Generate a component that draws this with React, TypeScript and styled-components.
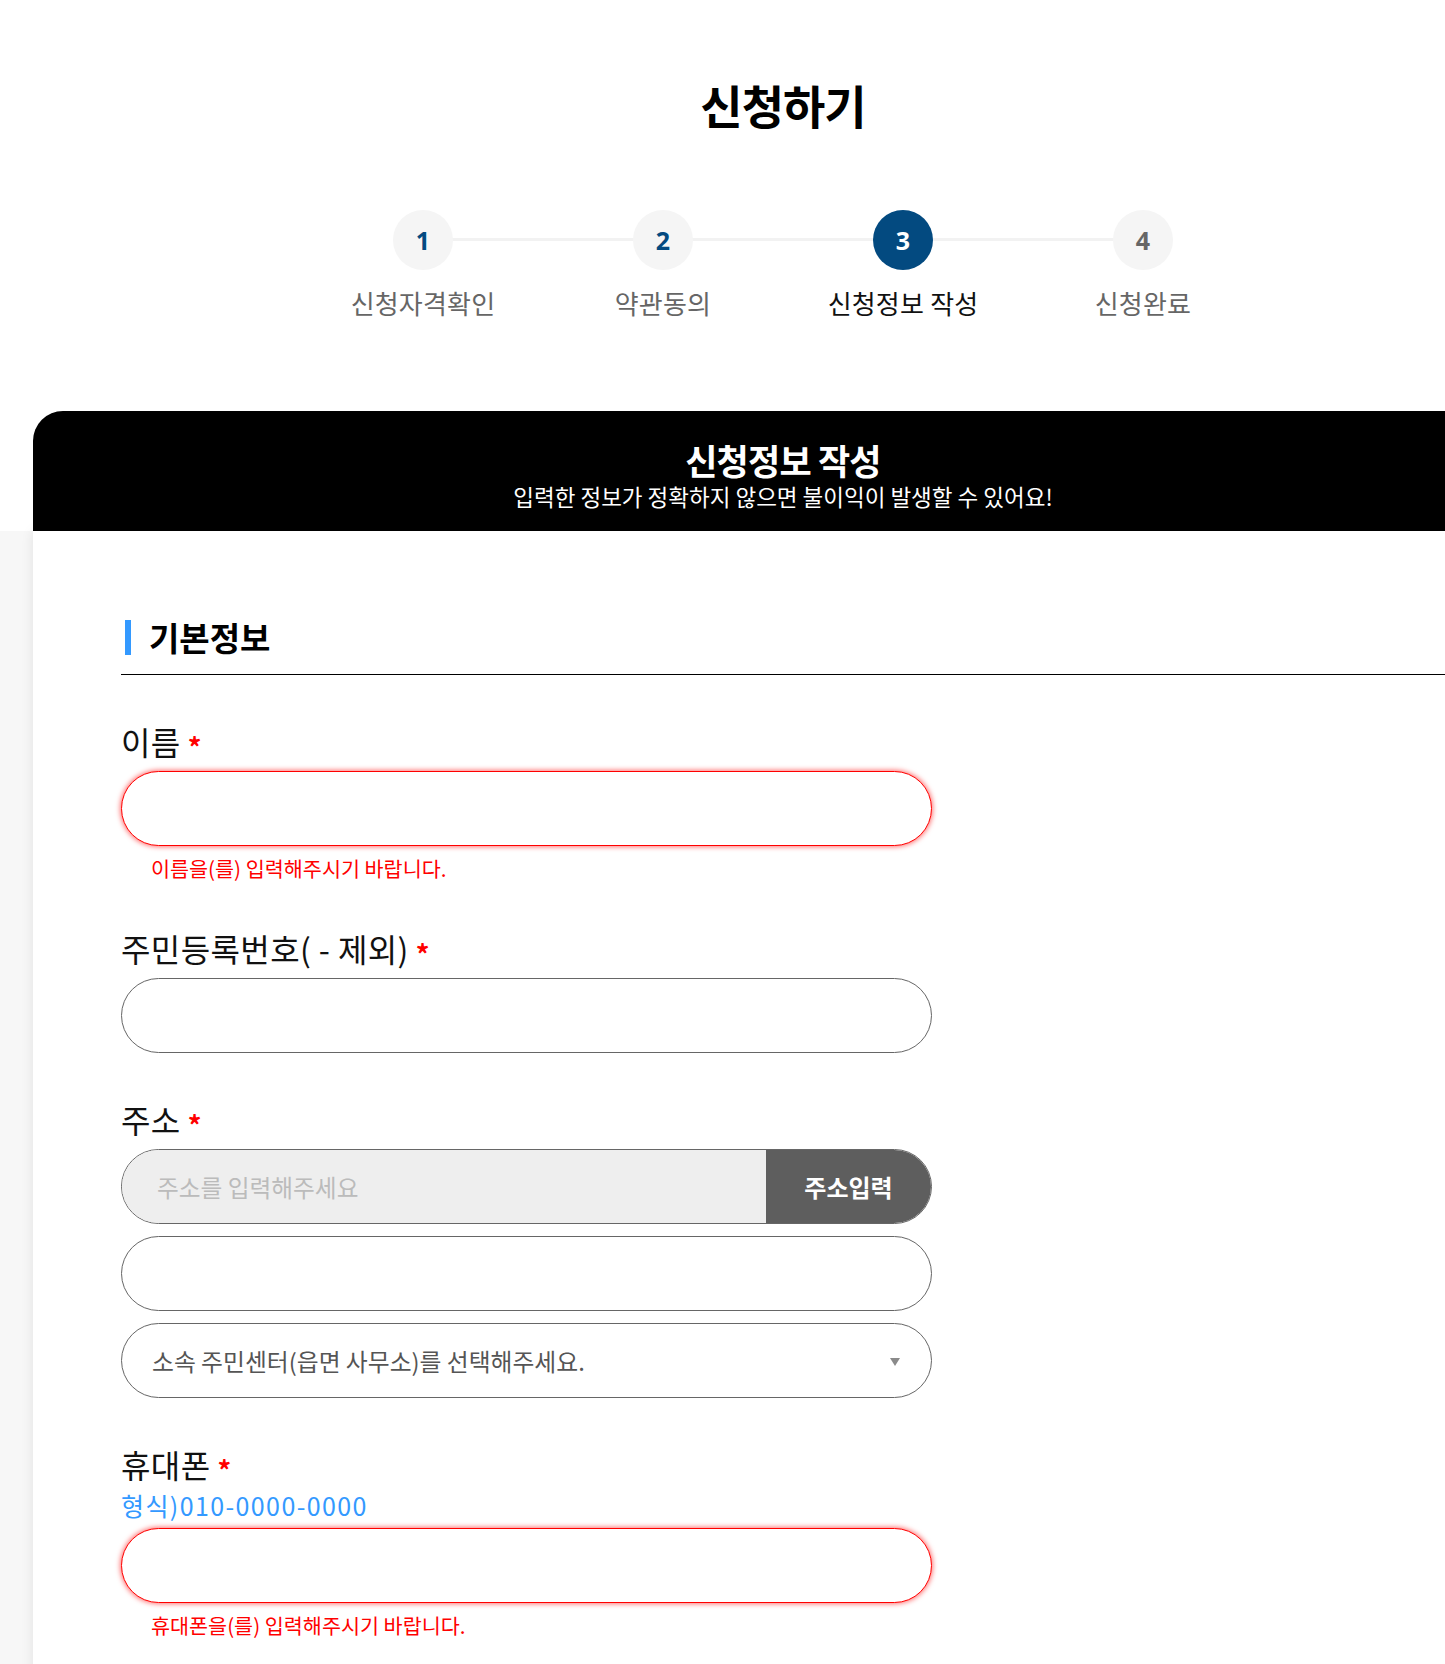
import React from "react";
import styled, { createGlobalStyle, css } from "styled-components";

const GlobalStyle = createGlobalStyle`
  html, body {
    margin: 0;
    padding: 0;
    background: #ffffff;
  }
  body {
    overflow-x: hidden;
    font-family: "Noto Sans CJK KR", "Noto Sans", sans-serif;
    color: #111;
  }
  * { box-sizing: border-box; }
`;

const Page = styled.div`
  width: 1566px;
  padding-bottom: 80px;
`;

const Title = styled.h1`
  margin: 0;
  padding-top: 74px;
  text-align: center;
  font-size: 46px;
  line-height: 60px;
  font-weight: 700;
  color: #000;
  letter-spacing: -1px;
`;

const Steps = styled.ol`
  list-style: none;
  margin: 76px auto 0;
  padding: 0;
  width: 960px;
  display: flex;
  position: relative;
  &::before {
    content: "";
    position: absolute;
    left: 120px;
    right: 120px;
    top: 28px;
    height: 3px;
    background: #f2f2f2;
  }
`;

const Step = styled.li`
  flex: 1;
  display: flex;
  flex-direction: column;
  align-items: center;
`;

const StepCircle = styled.span<{ $active?: boolean; $muted?: boolean }>`
  position: relative;
  z-index: 1;
  width: 60px;
  height: 60px;
  border-radius: 50%;
  display: flex;
  align-items: center;
  justify-content: center;
  font-family: "Open Sans", "Noto Sans", sans-serif;
  font-weight: 700;
  font-size: 25px;
  background: ${(p) => (p.$active ? "#034a80" : "#f5f5f5")};
  color: ${(p) => (p.$active ? "#ffffff" : p.$muted ? "#666666" : "#034a80")};
`;

const StepLabel = styled.span<{ $active?: boolean }>`
  margin-top: 17px;
  font-size: 26px;
  line-height: 32px;
  letter-spacing: 0.2px;
  color: ${(p) => (p.$active ? "#111111" : "#666666")};
`;

const HeaderBar = styled.div`
  margin: 92px 33px 0;
  height: 120px;
  padding-top: 26px;
  background: #000;
  border-radius: 30px 30px 0 0;
  color: #fff;
  text-align: center;
`;

const HeaderTitle = styled.h2`
  margin: 0;
  font-size: 35px;
  line-height: 46px;
  font-weight: 700;
  letter-spacing: -0.8px;
`;

const HeaderSub = styled.p`
  margin: 0;
  font-size: 22.5px;
  line-height: 26px;
`;

const GraySection = styled.section`
  background: #f7f7f7;
  padding: 0 33px;
`;

const FormCard = styled.div`
  background: #fff;
  box-shadow: 0 0 12px rgba(0, 0, 0, 0.09);
  padding: 86px 88px 60px 88px;
`;

const SectionTitle = styled.h3`
  margin: 0;
  padding: 0 0 17px 4px;
  display: flex;
  align-items: center;
  gap: 18px;
  border-bottom: 1px solid #000;
  font-size: 33px;
  line-height: 40px;
  font-weight: 700;
  color: #000;
  &::before {
    content: "";
    width: 6px;
    height: 35px;
    background: #3399ff;
  }
`;

const Fields = styled.div`
  width: 811px;
  padding-top: 46px;
  display: flex;
  flex-direction: column;
  gap: 46px;
`;

const Field = styled.div`
  display: flex;
  flex-direction: column;
`;

const Label = styled.label`
  display: flex;
  align-items: center;
  font-size: 32px;
  line-height: 40px;
  letter-spacing: 0.4px;
  color: #111;
`;

const Required = styled.span`
  margin-left: 7px;
  margin-top: 12px;
  color: #ff0000;
  font-size: 27px;
  line-height: 28px;
  font-weight: 700;
`;

const Hint = styled.p`
  margin: 6px 0 0;
  font-size: 25px;
  line-height: 30px;
  color: #3399ff;
  letter-spacing: 1.4px;
`;

const Stack = styled.div<{ $top?: number }>`
  margin-top: ${(p) => p.$top ?? 10}px;
  display: flex;
  flex-direction: column;
  gap: 12px;
`;

const pill = css`
  height: 75px;
  border-radius: 38px;
  border: 1px solid #666;
  background: #fff;
`;

const TextInput = styled.input<{ $error?: boolean }>`
  ${pill}
  width: 100%;
  padding: 0 34px;
  font-family: inherit;
  font-size: 23px;
  color: #333;
  outline: none;
  ${(p) =>
    p.$error &&
    css`
      border-color: #ff0000;
      box-shadow: 0 0 5px 1px rgba(255, 0, 0, 0.55);
    `}
`;

const ErrorText = styled.p`
  margin: 8px 0 0;
  padding-left: 30px;
  font-size: 20.7px;
  line-height: 28px;
  color: #ff0000;
`;

const AddressRow = styled.div`
  ${pill}
  display: flex;
  overflow: hidden;
`;

const AddressInput = styled.input`
  flex: 1;
  min-width: 0;
  border: none;
  background: #eeeeee;
  padding: 0 35px;
  font-family: inherit;
  font-size: 23.7px;
  color: #333;
  outline: none;
  &::placeholder {
    color: #bbbbbb;
  }
`;

const AddressButton = styled.button`
  width: 165px;
  border: none;
  background: #5e5e5e;
  color: #fff;
  font-family: inherit;
  font-size: 24px;
  font-weight: 700;
  cursor: pointer;
  padding-right: 6px;
`;

const SelectWrap = styled.div`
  position: relative;
  &::after {
    content: "";
    position: absolute;
    right: 32px;
    top: 50%;
    margin-top: -3px;
    border-left: 5px solid transparent;
    border-right: 5px solid transparent;
    border-top: 8px solid #8a8a8a;
    pointer-events: none;
  }
`;

const Select = styled.select`
  ${pill}
  width: 100%;
  appearance: none;
  -webkit-appearance: none;
  padding: 0 60px 0 30px;
  font-family: inherit;
  font-size: 23.8px;
  color: #555;
  outline: none;
`;

export default function App() {
  const steps = [
    { n: 1, label: "신청자격확인" },
    { n: 2, label: "약관동의" },
    { n: 3, label: "신청정보 작성", active: true },
    { n: 4, label: "신청완료", muted: true },
  ];
  return (
    <>
      <GlobalStyle />
      <Page>
        <Title>신청하기</Title>
        <Steps>
          {steps.map((s) => (
            <Step key={s.n}>
              <StepCircle $active={s.active} $muted={s.muted}>
                {s.n}
              </StepCircle>
              <StepLabel $active={s.active}>{s.label}</StepLabel>
            </Step>
          ))}
        </Steps>

        <HeaderBar>
          <HeaderTitle>신청정보 작성</HeaderTitle>
          <HeaderSub>입력한 정보가 정확하지 않으면 불이익이 발생할 수 있어요!</HeaderSub>
        </HeaderBar>

        <GraySection>
          <FormCard>
            <SectionTitle>기본정보</SectionTitle>
            <Fields>
              <Field>
                <Label>
                  이름<Required>*</Required>
                </Label>
                <Stack>
                  <TextInput $error />
                </Stack>
                <ErrorText>이름을(를) 입력해주시기 바랍니다.</ErrorText>
              </Field>

              <Field>
                <Label>
                  주민등록번호( - 제외)<Required>*</Required>
                </Label>
                <Stack>
                  <TextInput />
                </Stack>
              </Field>

              <Field>
                <Label>
                  주소<Required>*</Required>
                </Label>
                <Stack>
                  <AddressRow>
                    <AddressInput placeholder="주소를 입력해주세요" readOnly />
                    <AddressButton type="button">주소입력</AddressButton>
                  </AddressRow>
                  <TextInput />
                  <SelectWrap>
                    <Select defaultValue="">
                      <option value="">소속 주민센터(읍면 사무소)를 선택해주세요.</option>
                    </Select>
                  </SelectWrap>
                </Stack>
              </Field>

              <Field>
                <Label>
                  휴대폰<Required>*</Required>
                </Label>
                <Hint>형식)010-0000-0000</Hint>
                <Stack $top={8}>
                  <TextInput $error />
                </Stack>
                <ErrorText>휴대폰을(를) 입력해주시기 바랍니다.</ErrorText>
              </Field>
            </Fields>
          </FormCard>
        </GraySection>
      </Page>
    </>
  );
}
